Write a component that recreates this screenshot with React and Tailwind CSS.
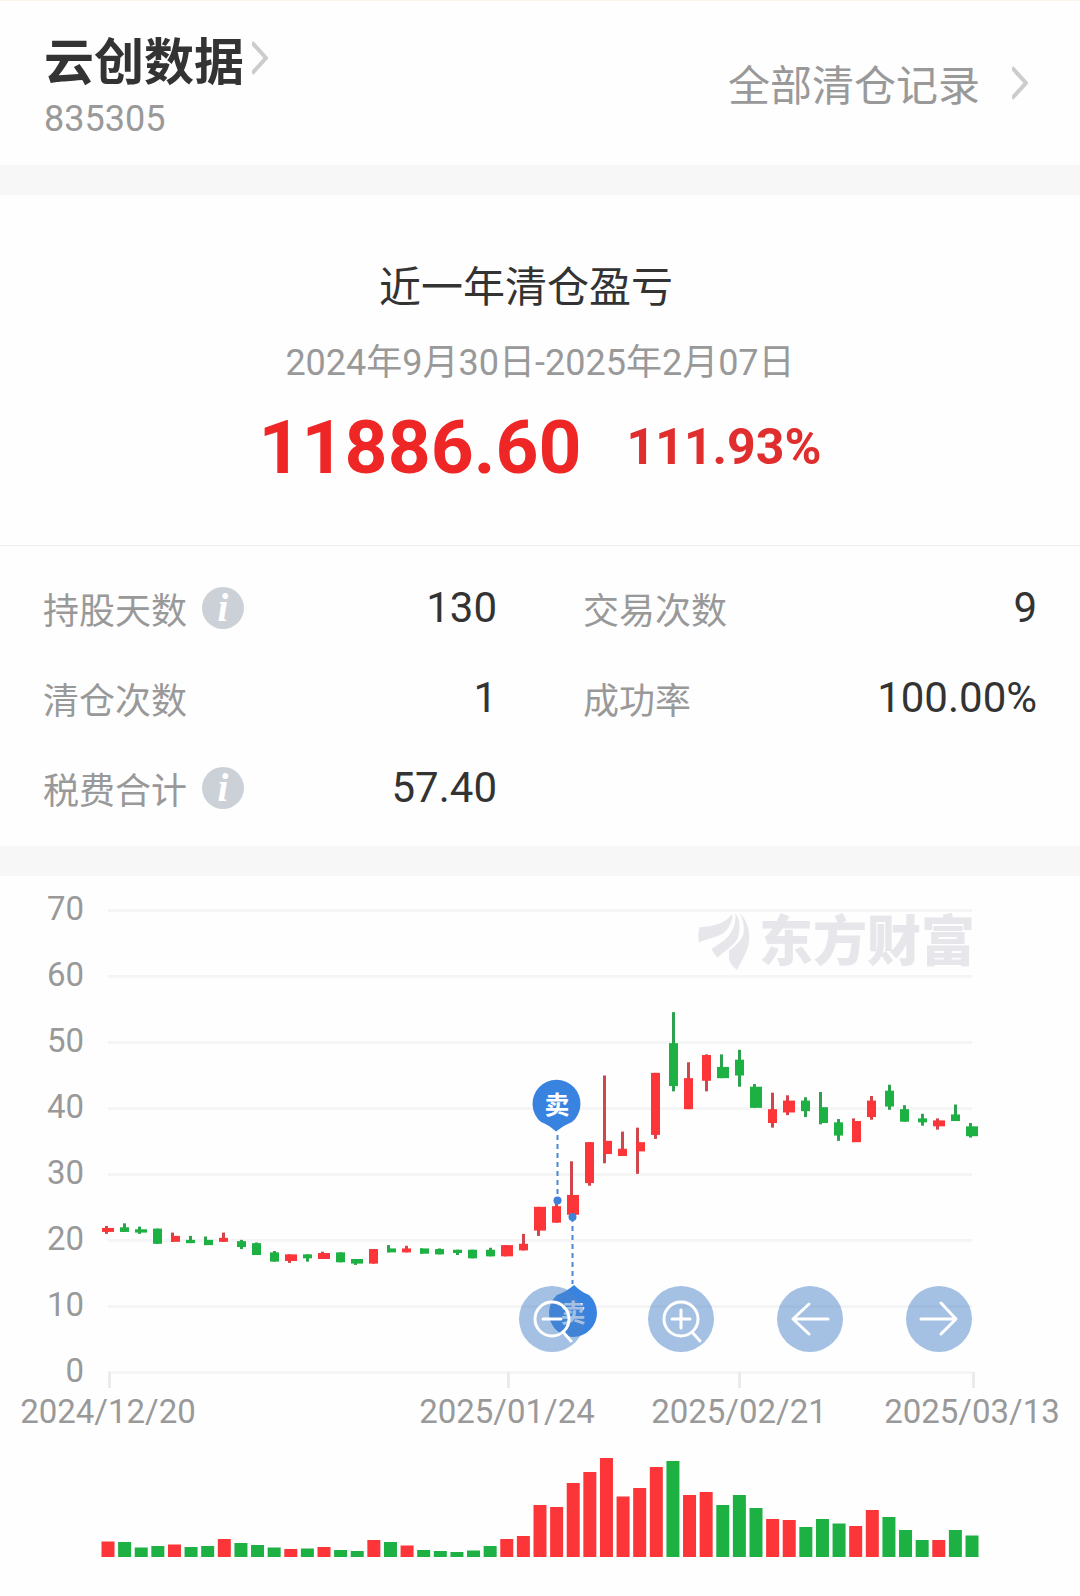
const RED = '#fb3538';
const GREEN = '#1db043';
const WICK_RED = '#cf474c';
const WICK_GREEN = '#2fa04f';

// [up, high, body top, body bottom, low, volume]
const CANDLES = [
  [1, 22.2, 21.9, 21.3, 21.0, 15.5],
  [0, 22.6, 22.0, 21.3, 21.3, 15],
  [0, 22.1, 21.7, 21.2, 21.0, 9.5],
  [0, 21.8, 21.8, 19.5, 19.5, 11],
  [1, 21.2, 20.7, 19.8, 19.8, 12.5],
  [0, 20.7, 20.1, 19.6, 19.6, 10],
  [0, 20.6, 20.1, 19.3, 19.3, 11],
  [1, 21.2, 20.4, 19.8, 19.8, 18],
  [0, 20.1, 19.9, 19.0, 18.7, 14],
  [0, 19.7, 19.6, 17.8, 17.8, 12],
  [0, 18.4, 18.2, 16.8, 16.8, 9.5],
  [1, 17.9, 17.9, 16.9, 16.6, 8],
  [0, 17.9, 17.9, 17.3, 16.8, 8.5],
  [1, 18.3, 18.1, 17.2, 17.2, 10],
  [0, 18.2, 18.2, 16.7, 16.7, 7],
  [0, 17.2, 17.2, 16.5, 16.3, 6],
  [1, 18.7, 18.7, 16.5, 16.5, 17],
  [0, 19.3, 18.8, 18.2, 18.2, 15],
  [1, 19.2, 18.8, 18.2, 18.2, 11.5],
  [0, 18.8, 18.8, 18.0, 18.0, 7],
  [0, 18.8, 18.7, 17.9, 17.9, 6],
  [0, 18.6, 18.6, 18.1, 17.8, 5],
  [0, 18.6, 18.6, 17.3, 17.3, 6.5],
  [0, 18.9, 18.6, 17.6, 17.6, 11],
  [1, 19.3, 19.3, 17.6, 17.6, 18],
  [1, 21.0, 19.5, 18.5, 18.5, 21],
  [1, 25.1, 25.1, 21.5, 20.7, 52],
  [1, 25.6, 25.2, 22.7, 22.7, 50],
  [1, 32.0, 26.9, 23.9, 23.9, 74],
  [1, 34.9, 34.9, 28.7, 28.3, 85],
  [1, 45.0, 35.1, 33.1, 31.7, 99],
  [1, 36.5, 33.9, 32.8, 32.8, 60.5],
  [1, 37.1, 34.9, 33.5, 30.1, 69],
  [1, 45.4, 45.4, 36.0, 35.4, 90],
  [0, 54.6, 49.9, 43.4, 42.6, 96],
  [1, 47.0, 44.6, 39.9, 39.9, 62],
  [1, 48.2, 48.1, 44.2, 42.6, 65],
  [0, 48.2, 46.3, 44.6, 44.6, 52],
  [0, 48.9, 47.4, 45.0, 43.3, 62],
  [0, 43.7, 43.3, 40.1, 40.1, 49],
  [1, 42.4, 39.9, 37.8, 37.1, 38],
  [1, 42.0, 41.2, 39.4, 39.0, 37],
  [0, 41.7, 41.2, 39.6, 38.7, 30],
  [0, 42.5, 40.2, 37.8, 37.6, 38],
  [0, 38.4, 37.9, 35.9, 35.1, 33.5],
  [1, 38.5, 38.1, 34.9, 34.9, 31],
  [1, 41.9, 41.2, 38.7, 38.3, 47],
  [0, 43.6, 42.7, 40.3, 39.8, 40],
  [0, 40.5, 39.9, 38.0, 38.0, 27],
  [0, 39.2, 38.5, 37.9, 37.4, 17],
  [1, 38.5, 38.2, 37.3, 36.8, 17],
  [0, 40.6, 39.1, 38.1, 38.1, 27],
  [0, 37.8, 37.3, 35.8, 35.6, 21.5],
];

const PRICE_TICKS = [70, 60, 50, 40, 30, 20, 10, 0];

const DATE_TICKS = [
  { label: '2024/12/20', x: 108, tick: 109.5 },
  { label: '2025/01/24', x: 507, tick: 508.5 },
  { label: '2025/02/21', x: 739, tick: 739.5 },
  { label: '2025/03/13', x: 972, tick: 973.5 },
];

const STATS = [
  { label: '持股天数', value: '130', info: true },
  { label: '交易次数', value: '9' },
  { label: '清仓次数', value: '1' },
  { label: '成功率', value: '100.00%' },
  { label: '税费合计', value: '57.40', info: true },
];

const LEFT = 108;
const RIGHT = 972;
const STEP = (RIGHT - LEFT) / (CANDLES.length - 1);
const VOLUME_BASE = 681;

const priceY = (price) => 496.5 - price * 6.6;
const candleX = (index) => LEFT + index * STEP;

const Chevron = () => (
  <svg className="w-4 h-[34px] shrink-0" viewBox="0 0 16 34" fill="none" stroke="#cccccc" strokeWidth="4" aria-hidden="true">
    <path d="M0 1.5 L14 17 L0 32.5" />
  </svg>
);

const InfoButton = ({ label }) => (
  <button
    type="button"
    aria-label={`${label}说明`}
    className="w-[42px] h-[42px] rounded-full bg-[#ccd0d7] text-white flex items-center justify-center font-['Liberation_Serif',serif] italic font-bold text-[39px] leading-[42px]"
  >
    i
  </button>
);

const Candle = ({ data, index }) => {
  const [up, high, top, bottom, low] = data;
  const x = candleX(index);
  // keep bodies and wicks on the 3px pixel grid so the edges stay sharp
  const left = Math.ceil((x - 6.3) / 3) * 3;
  const right = Math.floor((x + 6.3) / 3) * 3;
  const wick = Math.floor((x - 0.8) / 3) * 3;

  return (
    <g>
      <rect x={wick} y={priceY(high)} width="3" height={priceY(low) - priceY(high)} fill={up ? WICK_RED : WICK_GREEN} />
      <rect x={left} y={priceY(top)} width={right - left} height={priceY(bottom) - priceY(top)} fill={up ? RED : GREEN} />
    </g>
  );
};

const Watermark = () => (
  <g fill="#e6e6eb">
    <g transform="translate(660 14) scale(0.3333)">
      <path d="M117 158 Q112 130 119 112 C160 108 195 102 217 71 C219 90 208 118 186 132 C166 143 140 146 117 158 Z" />
      <path d="M226 69 C240 86 243 122 232 148 C218 170 190 186 173 203 Q159 190 155 176 C176 164 198 150 210 132 C224 112 228 92 226 69 Z" />
      <path d="M239 70 C262 92 270 122 267 152 C264 182 246 210 231 240 Q212 224 207 206 L207 182 C226 168 246 150 251 128 C254 106 248 88 239 70 Z" />
    </g>
    <text x="759" y="85" fontSize="54" className="font-['Noto_Sans_CJK_SC',sans-serif] font-black">东方财富</text>
  </g>
);

const SellMarkers = () => (
  <g>
    <g stroke="#4a88d4" strokeWidth="2" strokeDasharray="5 4">
      <line x1="557.5" y1="259" x2="557.5" y2="324" />
      <line x1="572.5" y1="341" x2="572.5" y2="408" />
    </g>
    <circle cx="557.5" cy="324.5" r="4" fill="#3f82d8" />
    <circle cx="572.5" cy="341" r="4" fill="#3f82d8" />

    <path d="M556 255.5 Q549 249 541 246 A24 24 0 1 1 572 246 Q564 249 556 255.5 Z" fill="#3883e0" />
    <text x="557" y="238" fontSize="25" textAnchor="middle" fill="#ffffff" className="font-['Noto_Sans_CJK_SC',sans-serif] font-bold">卖</text>

    <path d="M574 409 Q581 416 589 419 A24 24 0 1 1 557 419 Q566 416 574 409 Z" fill="#3883e0" />
    <text x="573" y="446" fontSize="25" textAnchor="middle" fill="#ffffff" className="font-['Noto_Sans_CJK_SC',sans-serif] font-bold">卖</text>
  </g>
);

const CHART_ACTIONS = [
  {
    name: '缩小',
    icon: (
      <>
        <circle cx="33" cy="33" r="17" />
        <path d="M24 33 H42 M44 46 L52 55" />
      </>
    ),
  },
  {
    name: '放大',
    icon: (
      <>
        <circle cx="33" cy="33" r="17" />
        <path d="M24 33 H42 M33 24 V42 M44 46 L52 55" />
      </>
    ),
  },
  { name: '向左', icon: <path d="M51 33 H17 M32 18 L16 33 L32 48" /> },
  { name: '向右', icon: <path d="M15 33 H49 M35 17 L50 33 L35 48" /> },
];

const Chart = () => (
  <section className="relative">
    <svg viewBox="0 0 1080 720" className="block w-full" role="img" aria-label="K线图">
      {PRICE_TICKS.map((price) => (
        <g key={price}>
          <line x1={LEFT} x2={RIGHT} y1={priceY(price)} y2={priceY(price)} stroke="#f5f5f5" strokeWidth="3" />
          <text x="84" y={priceY(price) + 9} fontSize="33" textAnchor="end" fill="#999999">{price}</text>
        </g>
      ))}

      {DATE_TICKS.map(({ label, x, tick }) => (
        <g key={label}>
          <line x1={tick} x2={tick} y1="496" y2="512" stroke="#ebebeb" strokeWidth="3" />
          <text x={x} y="547" fontSize="33" textAnchor="middle" fill="#999999">{label}</text>
        </g>
      ))}

      <Watermark />

      {CANDLES.map((data, index) => (
        <Candle key={index} data={data} index={index} />
      ))}

      {CANDLES.map(([up, , , , , volume], index) => (
        <rect
          key={index}
          x={candleX(index) - 6.5}
          y={VOLUME_BASE - volume}
          width="13"
          height={volume}
          fill={up ? RED : GREEN}
        />
      ))}

      <SellMarkers />
    </svg>

    {/* Zoom and pan buttons */}
    <div className="absolute right-[10%] top-[57%] flex gap-[63px]">
      {CHART_ACTIONS.map(({ name, icon }) => (
        <button key={name} type="button" aria-label={name} className="w-[66px] h-[66px] rounded-full bg-[#4983c7]/50">
          <svg viewBox="0 0 66 66" fill="none" stroke="#ffffff" strokeWidth="3" strokeLinecap="round" strokeLinejoin="round">
            {icon}
          </svg>
        </button>
      ))}
    </div>
  </section>
);

const App = () => {
  return (
    <main className="w-full bg-[#fefefe] text-[#333333] font-['Roboto','Noto_Sans_CJK_SC',sans-serif]">
      {/* Stock header */}
      <header className="flex items-start justify-between border-t border-[#fbf5ea] pl-11 pr-[52px] pt-[29px] pb-[25px]">
        <div>
          <a href="#stock" className="flex items-center gap-2 font-['Noto_Sans_CJK_SC',sans-serif]">
            <h1 className="text-[50px] leading-[56px] font-bold">云创数据</h1>
            <Chevron />
          </a>
          <p className="mt-3 text-[36px] leading-[42px] text-[#999999]">835305</p>
        </div>
        <a href="#records" className="mt-[26px] flex items-center gap-8 font-['Noto_Sans_CJK_SC',sans-serif] text-[42px] leading-[54px] text-[#999999]">
          全部清仓记录
          <Chevron />
        </a>
      </header>

      <div className="h-[30px] bg-[#f7f7f7]" />

      {/* Profit summary */}
      <section className="flex flex-col items-center border-b border-[#eeeeee] pt-[61px] pb-[56px]">
        <h2 className="pr-7 font-['Noto_Sans_CJK_SC',sans-serif] text-[42px] leading-[56px]">近一年清仓盈亏</h2>
        <p className="mt-[30px] text-[36px] leading-[42px] text-[#999999]">2024年9月30日-2025年2月07日</p>
        <div className="mt-[21px] flex items-center gap-[45px] font-bold">
          <span className="text-[75px] leading-[84px] text-[#ee2626]">11886.60</span>
          <span className="text-[50px] leading-[84px] text-[#e02d2d]">111.93%</span>
        </div>
      </section>

      {/* Stats */}
      <dl className="grid grid-cols-2 pt-[17px] pb-[13px]">
        {STATS.map(({ label, value, info }) => (
          <div key={label} className="flex h-[90px] items-center justify-between px-[43px]">
            <dt className="flex items-center gap-[15px] font-['Noto_Sans_CJK_SC',sans-serif] text-[36px] leading-[42px] text-[#999999]">
              {label}
              {info && <InfoButton label={label} />}
            </dt>
            <dd className="text-[42px] leading-[48px]">{value}</dd>
          </div>
        ))}
      </dl>

      <div className="h-[30px] bg-[#f7f7f7]" />

      <div className="font-['Roboto',sans-serif]">
        <Chart />
      </div>
    </main>
  );
};

export default App;
